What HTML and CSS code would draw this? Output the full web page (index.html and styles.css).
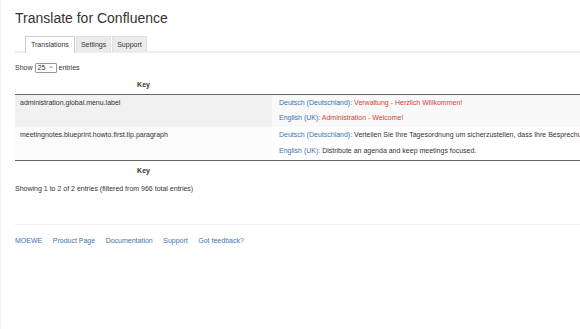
FILE: index.html
```html
<!DOCTYPE html>
<html>
<head>
    <link rel="stylesheet" href="styles.css">
</head>
<body>
    <div class="page">
        <h1 class="title">Translate for Confluence</h1>

        <ul class="tabs">
            <li class="tab active">Translations</li>
            <li class="tab">Settings</li>
            <li class="tab">Support</li>
        </ul>

        <div class="length">
            Show
            <span class="select">25 <span class="caret">&#8964;</span></span>
            entries
        </div>

        <table class="translations">
            <thead>
                <tr>
                    <th class="key-col">Key</th>
                    <th></th>
                </tr>
            </thead>
            <tbody>
                <tr class="odd">
                    <td class="key">administration.global.menu.label</td>
                    <td class="values">
                        <div class="line"><span class="lang">Deutsch (Deutschland):</span> <span class="missing">Verwaltung - Herzlich Willkommen!</span></div>
                        <div class="line"><span class="lang">English (UK):</span> <span class="missing">Administration - Welcome!</span></div>
                    </td>
                </tr>
                <tr class="even">
                    <td class="key">meetingnotes.blueprint.howto.first.tip.paragraph</td>
                    <td class="values">
                        <div class="line"><span class="lang">Deutsch (Deutschland):</span> Verteilen Sie Ihre Tagesordnung um sicherzustellen, dass Ihre Besprechungen fokussiert bleiben.</div>
                        <div class="line"><span class="lang">English (UK):</span> Distribute an agenda and keep meetings focused.</div>
                    </td>
                </tr>
            </tbody>
            <tfoot>
                <tr>
                    <th class="key-col">Key</th>
                    <th></th>
                </tr>
            </tfoot>
        </table>

        <div class="info">Showing 1 to 2 of 2 entries (filtered from 966 total entries)</div>

        <div class="footer">
            <a href="#">MOEWE</a>
            <a href="#">Product Page</a>
            <a href="#">Documentation</a>
            <a href="#">Support</a>
            <a href="#">Got feedback?</a>
        </div>
    </div>
</body>
</html>
```

FILE: styles.css
```css
body {
    margin: 0;
    font-family: "Liberation Sans", Arial, sans-serif;
    font-size: 7px;
    color: #333;
    background: white;
    overflow: hidden;
}
.page {
    min-height: 100vh;
    border-left: 1px solid #f0f0f0;
    padding-left: 14px;
}
.title {
    font-size: 14px;
    font-weight: normal;
    line-height: 20px;
    margin: 0;
    padding-top: 8px;
    color: #333;
}
.tabs {
    display: flex;
    list-style: none;
    margin: 8px 0 0 0;
    padding: 0 0 0 10px;
    border-bottom: 2px solid #eeeeee;
    height: 15px;
}
.tab {
    line-height: 15px;
    padding: 0 4px;
    margin-right: 1px;
    background: #ebebeb;
    border: 1px solid #e0e0e0;
    border-bottom: none;
    box-sizing: border-box;
    height: 16px;
}
.tab.active {
    background: white;
    border-color: #ccc;
    padding: 0 5px;
    height: 17px;
}
.length {
    margin-top: 9px;
    height: 11px;
    line-height: 11px;
    display: flex;
    align-items: center;
    gap: 2px;
}
.select {
    display: inline-flex;
    align-items: center;
    justify-content: space-between;
    width: 22px;
    height: 10px;
    padding: 0 2px;
    box-sizing: border-box;
    border: 1px solid #999;
    border-radius: 1px;
    line-height: 8px;
}
.caret {
    font-size: 7px;
    line-height: 4px;
    color: #666;
    margin-top: -3px;
}
.translations {
    width: 900px;
    margin-top: 3px;
    border-collapse: collapse;
    border-spacing: 0;
}
.translations th {
    font-weight: bold;
    line-height: 8px;
    padding: 5px;
    text-align: center;
}
.translations .key-col {
    width: 247px;
}
.translations thead th {
    border-bottom: 1px solid #666;
}
.translations tfoot th {
    border-top: 1px solid #666;
    padding-top: 6px;
}
.translations td {
    vertical-align: top;
    line-height: 8px;
    white-space: nowrap;
}
.key {
    padding: 4px 5px;
}
.values {
    padding: 4px 7px 5px 7px;
}
.line + .line {
    margin-top: 7px;
}
.odd .key {
    background: #f1f1f1;
}
.odd .values {
    background: #f9f9f9;
}
.even .key {
    background: #fafafa;
}
.even .line + .line {
    margin-top: 8px;
}
.lang {
    color: #3b73af;
}
.missing {
    color: #d04437;
}
.info {
    margin-top: 5px;
    line-height: 8px;
}
.footer {
    margin-top: 31px;
    border-top: 1px solid #eeeeee;
    padding-top: 12px;
    display: flex;
    gap: 10.5px;
    line-height: 8px;
}
.footer a {
    color: #3b73af;
    text-decoration: none;
}
```
